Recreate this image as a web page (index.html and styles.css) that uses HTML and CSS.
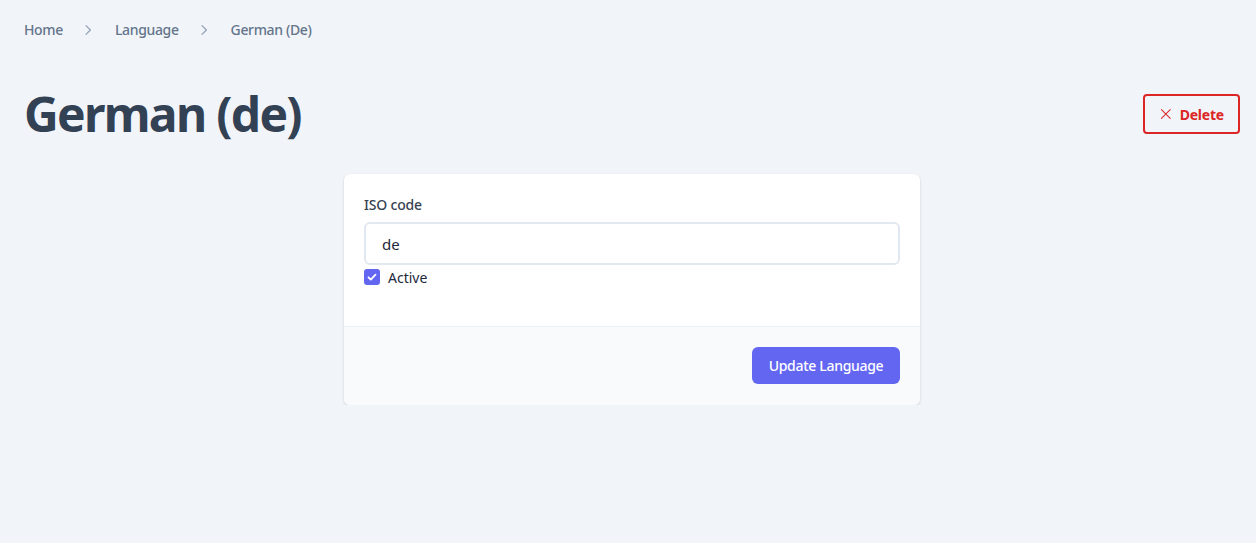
FILE: index.html
```html
<!DOCTYPE html>
<html lang="en">
<head>
<meta charset="utf-8">
<title>German (de)</title>
<link rel="stylesheet" href="styles.css">
</head>
<body>
<div class="page">
  <nav class="crumbs">
    <a class="crumb" href="#">Home</a>
    <svg class="chev" viewBox="0 0 20 20" width="16" height="16"><path d="M7.5 4.5L13 10l-5.5 5.5" fill="none" stroke="currentColor" stroke-width="1.6" stroke-linecap="round" stroke-linejoin="round"/></svg>
    <a class="crumb" href="#">Language</a>
    <svg class="chev" viewBox="0 0 20 20" width="16" height="16"><path d="M7.5 4.5L13 10l-5.5 5.5" fill="none" stroke="currentColor" stroke-width="1.6" stroke-linecap="round" stroke-linejoin="round"/></svg>
    <span class="crumb">German (De)</span>
  </nav>
  <header class="head">
    <h1 class="title">German (de)</h1>
    <button class="btn-delete" type="button">
      <svg viewBox="0 0 16 16" width="14" height="14"><path d="M2 2l12 12M14 2L2 14" fill="none" stroke="currentColor" stroke-width="1.4" stroke-linecap="round"/></svg>
      <span>Delete</span>
    </button>
  </header>
  <main class="main">
    <form class="card">
      <div class="card-body">
        <label class="label" for="iso">ISO code</label>
        <input class="input" id="iso" type="text" value="de">
        <label class="check">
          <span class="box"><svg viewBox="0 0 16 16" width="16" height="16"><path d="M4.5 8.3l2.3 2.3 4.7-4.9" fill="none" stroke="#fff" stroke-width="1.8" stroke-linecap="round" stroke-linejoin="round"/></svg></span>
          <span>Active</span>
        </label>
      </div>
      <div class="card-foot">
        <button class="btn-primary" type="button">Update Language</button>
      </div>
    </form>
  </main>
</div>
</body>
</html>
```
FILE: styles.css
```css
* { box-sizing: border-box; }
html, body { margin: 0; padding: 0; }
body {
  background: #f1f4f9;
  font-family: "Noto Sans", "Open Sans", sans-serif;
  color: #334155;
}
.page { padding: 0 16px 0 24px; }
.crumbs {
  display: flex;
  align-items: center;
  height: 59px;
  font-size: 14px;
  font-weight: 500;
}
.crumb { color: #64748b; text-decoration: none; letter-spacing: -0.35px; }
.chev { color: #94a3b8; margin: 0 19px 0 17px; }
.head {
  display: flex;
  justify-content: space-between;
  align-items: center;
  margin-top: 17px;
  height: 76px;
}
.title {
  margin: 0;
  font-size: 48px;
  font-weight: 700;
  color: #334155;
  letter-spacing: -1.7px;
  line-height: 1;
}
.btn-delete {
  display: flex;
  align-items: center;
  gap: 8px;
  height: 40px;
  width: 97px;
  padding: 0 14px 0 15px;
  border: 2px solid #dc2626;
  border-radius: 4px;
  background: transparent;
  color: #dc2626;
  font-family: inherit;
  font-size: 14px;
  font-weight: 700;
  letter-spacing: -0.2px;
}
.main {
  display: flex;
  justify-content: center;
  margin-top: 22px;
}
.card {
  width: 576px;
  background: #fff;
  border-radius: 6px;
  box-shadow: 0 1px 3px rgba(15,23,42,0.12), 0 1px 2px rgba(15,23,42,0.06);
  overflow: hidden;
}
.card-body {
  padding: 20px 20px 41px;
  display: flex;
  flex-direction: column;
}
.label {
  font-size: 14px;
  font-weight: 500;
  color: #374151;
  line-height: 22px;
  letter-spacing: -0.2px;
}
.input {
  margin-top: 6px;
  height: 43px;
  border: 2px solid #e2e8f0;
  border-radius: 6px;
  padding: 0 16px;
  font-family: inherit;
  font-size: 15px;
  color: #1e293b;
  outline: none;
}
.check {
  display: flex;
  align-items: center;
  gap: 8px;
  margin-top: 4px;
  font-size: 14px;
  color: #1e293b;
  height: 16px;
}
.box {
  width: 16px;
  height: 16px;
  border-radius: 3px;
  background: #6366f1;
  display: flex;
}
.card-foot {
  background: #f8fafc;
  border-top: 1px solid #eef0f8;
  display: flex;
  justify-content: flex-end;
  padding: 20px 20px 21px;
}
.btn-primary {
  height: 37px;
  width: 148px;
  border: 0;
  border-radius: 6px;
  background: #6366f1;
  color: #fff;
  font-family: inherit;
  font-size: 14px;
  font-weight: 500;
  letter-spacing: -0.3px;
}
```
